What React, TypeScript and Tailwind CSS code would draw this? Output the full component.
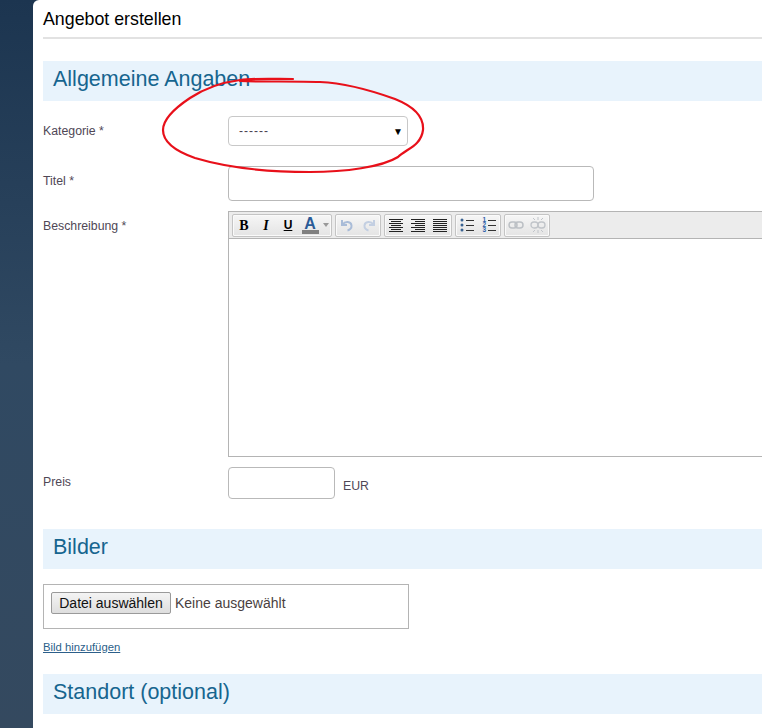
import React from 'react';

const SectionBar = ({ title }: { title: string }) => (
  <div className="h-10 bg-[#e8f3fc] pl-[10px] pb-[2px] flex items-center text-[21.5px] leading-none text-[#16658f]">{title}</div>
);

const Label = ({ children }: { children: React.ReactNode }) => (
  <div className="w-[185px] shrink-0 text-[12.3px] leading-[14px] text-[#4f4756]">{children}</div>
);

const Group = ({ children }: { children: React.ReactNode }) => (
  <div className="h-[23px] flex items-center border border-[#c4c4c4] rounded-[2px] bg-gradient-to-b from-[#f6f6f6] to-[#e4e4e4] shadow-[inset_0_0_0_1px_#fafafa]">
    {children}
  </div>
);

const Btn = ({ children, w = 22 }: { children: React.ReactNode; w?: number }) => (
  <div className="h-full flex items-center justify-center" style={{ width: w }}>{children}</div>
);

const Lines = ({ rows }: { rows: [number, number][] }) => (
  <svg width="16" height="14" viewBox="0 0 16 14" stroke="#222" strokeWidth="1">
    {rows.map(([a, b], i) => (
      <line key={i} x1={a} x2={b} y1={1.5 + i * 2} y2={1.5 + i * 2} />
    ))}
  </svg>
);

const ListIcon = ({ numbered }: { numbered?: boolean }) => (
  <svg width="16" height="16" viewBox="0 0 16 16">
    {[3, 8, 13].map((y, i) => (
      <g key={y}>
        {numbered ? (
          <text x="1.500" y={y + 2} fontSize="6.500" fontWeight="bold" fill="#2f62a8" fontFamily="Liberation Sans, sans-serif">{i + 1}</text>
        ) : (
          <circle cx="3" cy={y} r="1.500" fill="#3a6291" />
        )}
        <line x1="7" x2="15" y1={y + 0.5} y2={y + 0.5} stroke="#333" />
      </g>
    ))}
  </svg>
);

const Toolbar = () => (
  <div className="h-[27px] shrink-0 bg-[#ececec] border-b border-[#b4b4b4] flex items-center pl-[3px] gap-[3px]">
    <Group>
      <Btn><span className="font-['Liberation_Serif',serif] font-bold text-[14px] text-black">B</span></Btn>
      <Btn><span className="font-['Liberation_Serif',serif] font-bold italic text-[14px] text-black">I</span></Btn>
      <Btn><span className="font-['Liberation_Sans',sans-serif] font-bold underline text-[12px] text-black">U</span></Btn>
      <Btn>
        <div className="flex flex-col items-center leading-none">
          <span className="font-['Liberation_Sans',sans-serif] font-bold text-[16px] leading-[13px] text-[#2b5b97]">A</span>
          <div className="w-[17px] h-[4px] bg-[#808080]" />
        </div>
      </Btn>
      <Btn w={10}>
        <svg width="6" height="4" viewBox="0 0 6 4"><path d="M0 0h6L3 4z" fill="#999" /></svg>
      </Btn>
    </Group>
    <Group>
      <Btn w={22}>
        <svg width="16" height="16" viewBox="0 0 16 16" fill="none" stroke="#a9bcd8" strokeWidth="2">
          <path d="M3 3v5h5" />
          <path d="M3.500 7.500C6 4 12 4 12.500 8.500c.3 2.500-2 4.500-4 5" />
        </svg>
      </Btn>
      <Btn w={22}>
        <svg width="16" height="16" viewBox="0 0 16 16" fill="none" stroke="#c3cfe2" strokeWidth="2">
          <path d="M13 3v5H8" />
          <path d="M12.500 7.500C10 4 4 4 3.500 8.500c-.3 2.500 2 4.500 4 5" />
        </svg>
      </Btn>
    </Group>
    <Group>
      <Btn w={22}><Lines rows={[[1, 15], [3, 13], [1, 15], [3, 13], [1, 15], [3, 13], [1, 15]]} /></Btn>
      <Btn w={22}><Lines rows={[[1, 15], [5, 15], [1, 15], [5, 15], [1, 15], [5, 15], [1, 15]]} /></Btn>
      <Btn w={22}><Lines rows={[[1, 15], [1, 15], [1, 15], [1, 15], [1, 15], [1, 15], [1, 15]]} /></Btn>
    </Group>
    <Group>
      <Btn w={22}><ListIcon /></Btn>
      <Btn w={22}><ListIcon numbered /></Btn>
    </Group>
    <Group>
      <Btn w={22}>
        <svg width="16" height="12" viewBox="0 0 16 12" fill="none" stroke="#bcc0c5" strokeWidth="1.500">
          <rect x="1" y="3" width="8" height="6" rx="3" />
          <rect x="7" y="3" width="8" height="6" rx="3" />
        </svg>
      </Btn>
      <Btn w={22}>
        <svg width="18" height="18" viewBox="0 0 18 18" fill="none" stroke="#c0c4c9" strokeWidth="1.300">
          <rect x="2" y="6" width="7" height="6" rx="3" />
          <rect x="9" y="6" width="7" height="6" rx="3" />
          <path d="M9 1v3M9 14v3M4 2l2 2M14 2l-2 2M4 16l2-2M14 16l-2-2" strokeWidth="1" />
        </svg>
      </Btn>
    </Group>
  </div>
);

export default function App() {
  return (
    <div className="w-[762px] h-[728px] overflow-hidden flex bg-gradient-to-b from-[#1c3550] via-[#304962] to-[#34495f] font-['Liberation_Sans',sans-serif]">
      <div className="w-[33px] shrink-0" />
      <div className="relative flex-1 min-w-0 bg-white rounded-tl-[6px] pl-[10px]">
        <div className="h-[39px] border-b-2 border-[#e2e2e2] flex items-center text-[17.8px] leading-none text-black pt-[3px]">Angebot erstellen</div>

        <div className="mt-[22px]"><SectionBar title="Allgemeine Angaben" /></div>

        <div className="mt-[15px] flex items-center">
          <Label>Kategorie *</Label>
          <div className="w-[180px] h-[30px] border border-[#c8c8c8] rounded-[4px] flex items-center justify-between pl-[10px] pr-[4px] text-[12px] tracking-[1px] text-[#4a4150]">
            <span>------</span>
            <span className="text-[10px] tracking-normal text-black">▼</span>
          </div>
        </div>

        <div className="mt-[20px] flex">
          <div className="pt-[8px]"><Label>Titel *</Label></div>
          <div className="w-[366px] h-[35px] border border-[#b9b9b9] rounded-[4px]" />
        </div>

        <div className="mt-[10px] flex">
          <div className="pt-[8px]"><Label>Beschreibung *</Label></div>
          <div className="w-[600px] shrink-0 h-[246px] border border-[#b4b4b4] flex flex-col">
            <Toolbar />
          </div>
        </div>

        <div className="mt-[10px] flex">
          <div className="pt-[8px]"><Label>Preis</Label></div>
          <div className="w-[107px] h-[32px] border border-[#b9b9b9] rounded-[4px]" />
          <div className="ml-[8px] pt-[12px] text-[12.3px] leading-[14px] text-[#4f4756]">EUR</div>
        </div>

        <div className="mt-[30px]"><SectionBar title="Bilder" /></div>

        <div className="mt-[15px] w-[366px] h-[45px] border border-[#b4b4b4] pl-[7px] pt-[7px]">
          <div className="flex items-center gap-[4px]">
            <button className="h-[22px] w-[120px] border border-[#9a9a9a] rounded-[2px] bg-gradient-to-b from-[#f4f4f4] to-[#dedede] text-[14px] text-[#111]">Datei auswählen</button>
            <span className="text-[14px] text-[#4a3f3f]">Keine ausgewählt</span>
          </div>
        </div>

        <a className="mt-[11px] block text-[11.3px] leading-[14px] underline text-[#2c5f8a]">Bild hinzufügen</a>

        <div className="mt-[20px]"><SectionBar title="Standort (optional)" /></div>

        <svg className="absolute left-0 top-0 pointer-events-none" width="420" height="190" viewBox="33 0 420 190" fill="none" stroke="#e8101a" strokeWidth="2.200" strokeLinecap="round">
          <path d="M293 79C275 79 255 78 240 80C225 82 205 88 190 98C172 110 163 120 163 130C163 142 175 151 195 158C225 167 260 172 310 172C345 172 382 167 398 157C406 149 421 146 423 130C424 117 415 107 395 99C370 90 345 83 320 82C295 81 262 82 240 81" />
        </svg>
      </div>
    </div>
  );
}
